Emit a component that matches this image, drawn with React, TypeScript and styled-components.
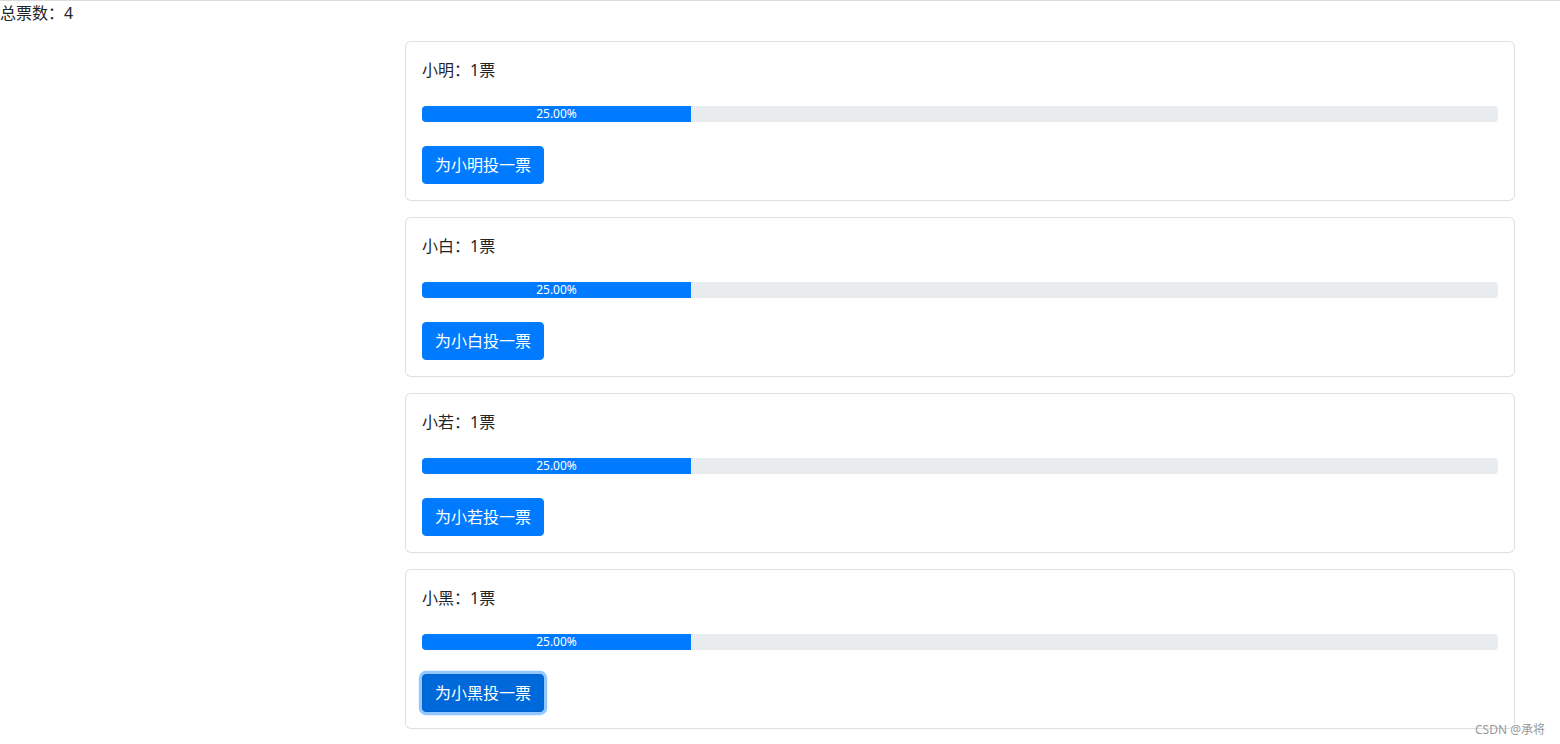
import styled, { createGlobalStyle } from 'styled-components';

const GlobalStyle = createGlobalStyle`
  html, body {
    margin: 0;
    padding: 0;
    background: #fff;
  }
  body {
    font-family: "Noto Sans", "Noto Sans CJK SC", sans-serif;
    font-size: 16px;
    line-height: 1.5;
    color: #212529;
  }
  * {
    box-sizing: border-box;
  }
`;

type Candidate = { name: string; votes: number; focused?: boolean };

const candidates: Candidate[] = [
  { name: '小明', votes: 1 },
  { name: '小白', votes: 1 },
  { name: '小若', votes: 1 },
  { name: '小黑', votes: 1, focused: true },
];

const Page = styled.div`
  position: relative;
  min-height: 744px;
  border-top: 1px solid #dcdcdc;
`;

const Total = styled.div`
  height: 24px;
`;

const CardList = styled.div`
  display: flex;
  flex-direction: column;
  gap: 16px;
  width: 1110px;
  margin-left: 405px;
  padding-top: 16px;
`;

const Card = styled.div`
  display: flex;
  flex-direction: column;
  gap: 24px;
  padding: 16px;
  border: 1px solid rgba(0, 0, 0, 0.125);
  border-radius: 6px;
  background: #fff;
`;

const Title = styled.div`
  height: 24px;
`;

const Progress = styled.div`
  display: flex;
  height: 16px;
  overflow: hidden;
  font-size: 12px;
  line-height: 16px;
  background-color: #e9ecef;
  border-radius: 4px;
`;

const ProgressBar = styled.div`
  display: flex;
  justify-content: center;
  color: #fff;
  background-color: #007bff;
  white-space: nowrap;
`;

const ButtonRow = styled.div`
  display: flex;
`;

const VoteButton = styled.button<{ $focused?: boolean }>`
  font-family: inherit;
  font-size: 16px;
  line-height: 24px;
  padding: 6px 12px;
  color: #fff;
  border-radius: 4px;
  cursor: pointer;
  background-color: ${(p) => (p.$focused ? '#0069d9' : '#007bff')};
  border: 1px solid ${(p) => (p.$focused ? '#0062cc' : '#007bff')};
  box-shadow: ${(p) => (p.$focused ? '0 0 0 3.2px rgba(38, 143, 255, 0.5)' : 'none')};
  outline: none;
`;

const Watermark = styled.div`
  position: absolute;
  right: 15px;
  bottom: 6px;
  font-size: 12px;
  line-height: 16px;
  color: #999;
`;

export default function App() {
  const total = candidates.reduce((sum, c) => sum + c.votes, 0);

  return (
    <Page>
      <GlobalStyle />
      <Total>总票数：{total}</Total>
      <CardList>
        {candidates.map((c) => {
          const pct = total ? (c.votes / total) * 100 : 0;
          return (
            <Card key={c.name}>
              <Title>
                {c.name}：{c.votes}票
              </Title>
              <Progress>
                <ProgressBar style={{ width: `${pct}%` }}>{pct.toFixed(2)}%</ProgressBar>
              </Progress>
              <ButtonRow>
                <VoteButton $focused={c.focused}>为{c.name}投一票</VoteButton>
              </ButtonRow>
            </Card>
          );
        })}
      </CardList>
      <Watermark>CSDN @承将</Watermark>
    </Page>
  );
}
